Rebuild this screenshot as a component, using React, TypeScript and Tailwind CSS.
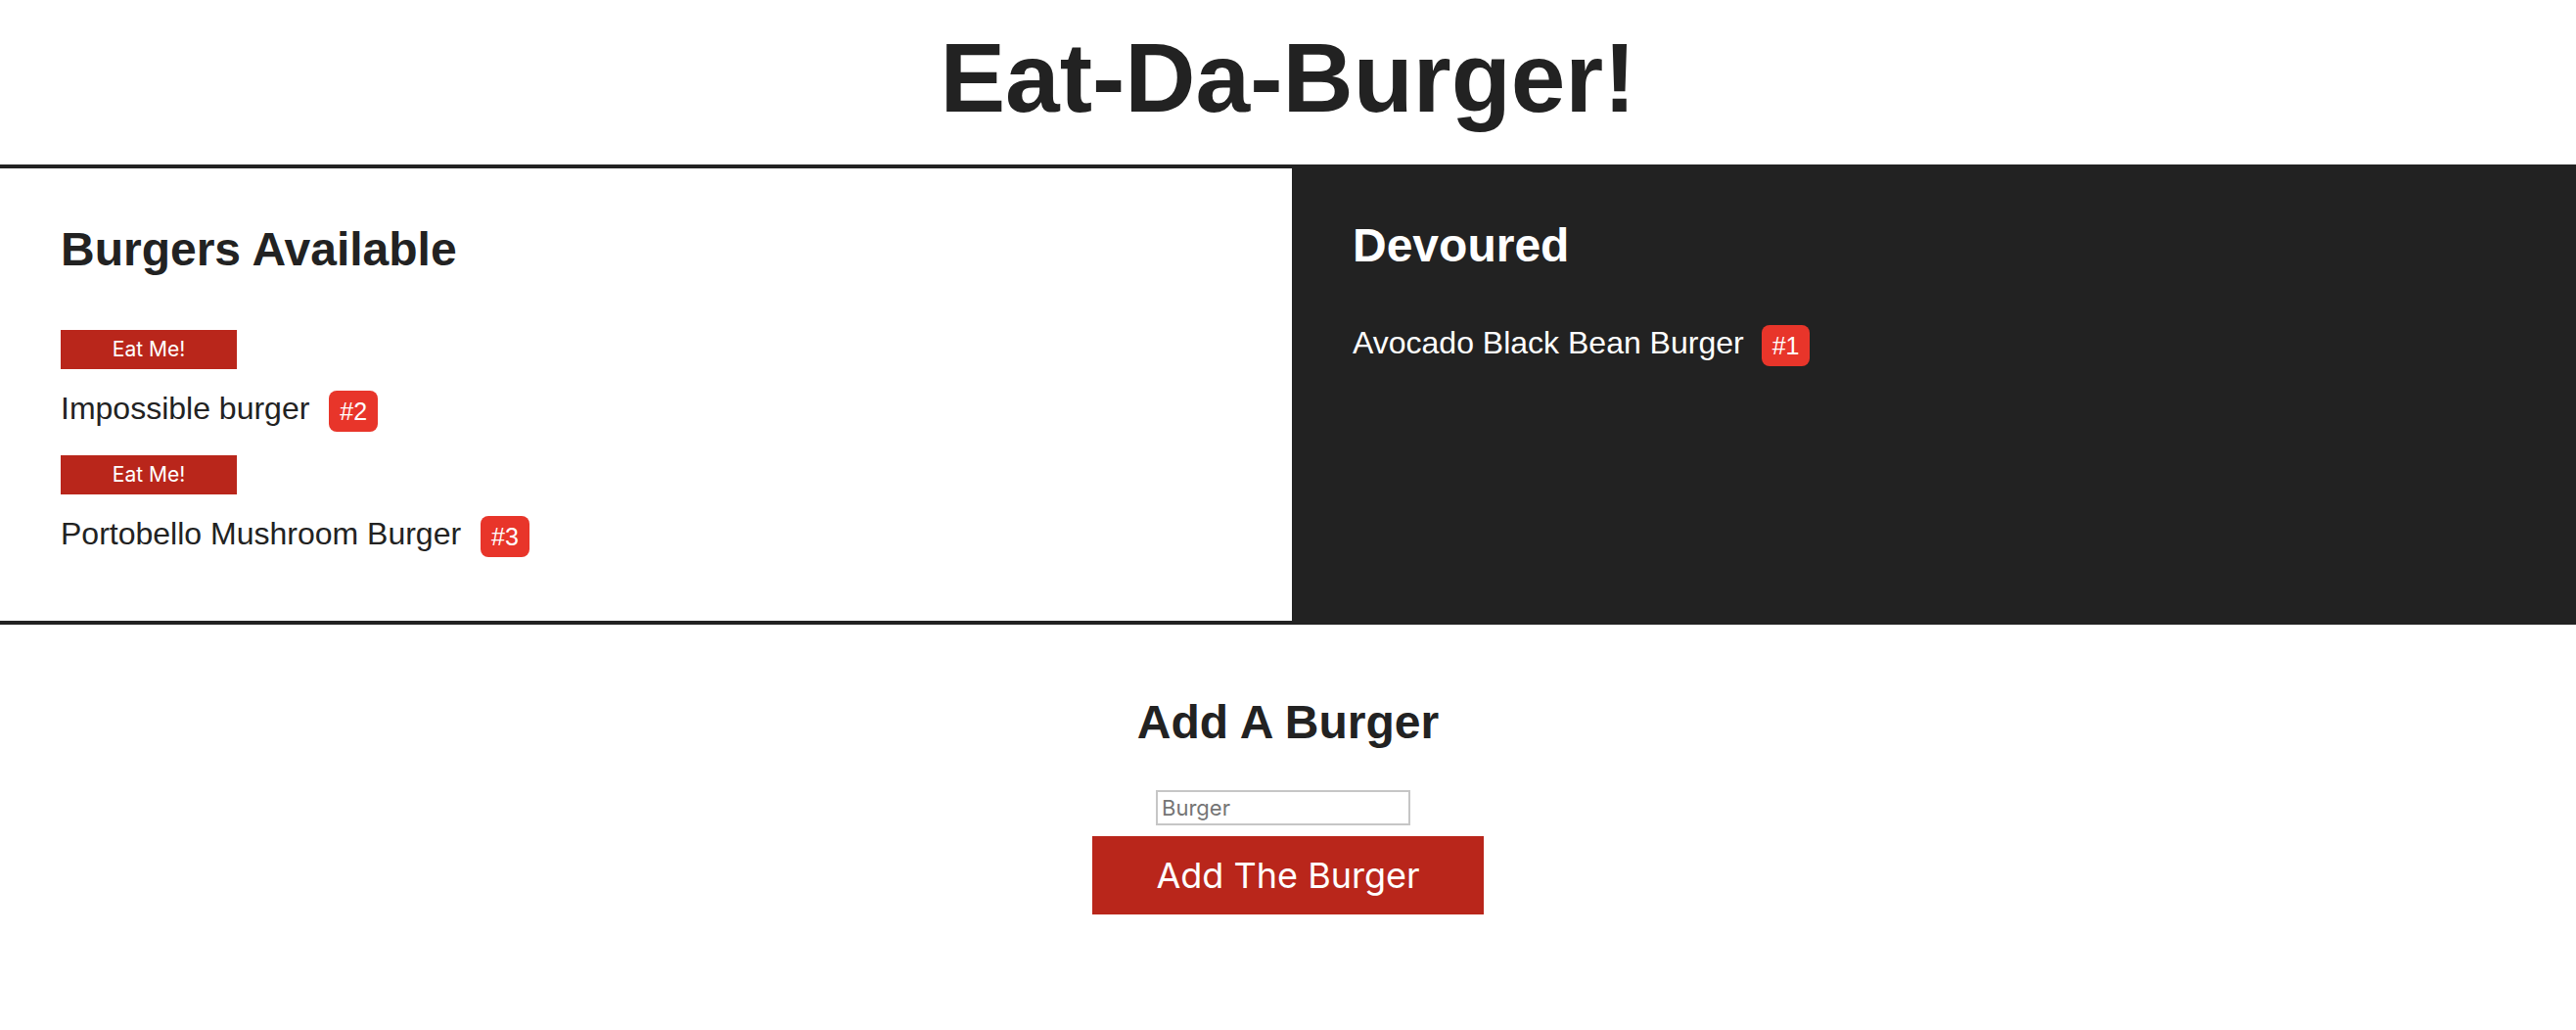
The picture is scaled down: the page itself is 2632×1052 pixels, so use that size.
const available = [
  { id: 2, name: "Impossible burger" },
  { id: 3, name: "Portobello Mushroom Burger" },
];

const devoured = [{ id: 1, name: "Avocado Black Bean Burger" }];

function Badge({ n }: { n: number }) {
  return (
    <span className="inline-block h-[42px] px-[11px] rounded-[8px] bg-[#e8352a] text-white text-[25px] leading-[42px]">
      #{n}
    </span>
  );
}

export default function App() {
  return (
    <div className="min-h-screen bg-white text-[#222] font-['Liberation_Sans',Arial,sans-serif]">
      {/* Title */}
      <header className="h-[168px] pt-[29px] text-center">
        <h1 className="text-[100px] leading-[100px] font-bold">Eat-Da-Burger!</h1>
      </header>

      {/* Burger columns */}
      <main className="flex h-[470px]">
        <section className="w-[1320px] border-y-4 border-[#222] bg-white pl-[62px] pt-[59px]">
          <h2 className="text-[48px] leading-[48px] font-bold">Burgers Available</h2>
          <ul className="mt-[58px] flex flex-col gap-[24px]">
            {available.map((b) => (
              <li key={b.id} className="flex flex-col items-start">
                <button className="w-[180px] h-[40px] bg-[#b9261b] text-white text-[21px] font-['Inter',sans-serif]">
                  Eat Me!
                </button>
                <div className="mt-[22px] flex items-start">
                  <span className="text-[32px] leading-[36px]">{b.name}</span>
                  <span className="ml-[20px] flex">
                    <Badge n={b.id} />
                  </span>
                </div>
              </li>
            ))}
          </ul>
        </section>

        <section className="flex-1 bg-[#222] text-white pl-[62px] pt-[59px]">
          <h2 className="text-[48px] leading-[48px] font-bold">Devoured</h2>
          <ul className="mt-[57px]">
            {devoured.map((b) => (
              <li key={b.id} className="flex items-start">
                <span className="text-[32px] leading-[36px]">{b.name}</span>
                <span className="ml-[18px] flex">
                  <Badge n={b.id} />
                </span>
              </li>
            ))}
          </ul>
        </section>
      </main>

      {/* Add form */}
      <section className="pt-[76px] flex flex-col items-center">
        <h3 className="text-[48px] leading-[48px] font-bold">Add A Burger</h3>
        <input
          type="text"
          placeholder="Burger"
          className="mt-[45px] mr-[10px] w-[260px] h-[36px] border-2 border-[#c6c6c6] px-[4px] text-[22px] font-['Inter',sans-serif] placeholder:text-[#757575] outline-none"
        />
        <button className="mt-[11px] w-[400px] h-[80px] bg-[#b9261b] text-white text-[36px] font-['Inter',sans-serif]">
          Add The Burger
        </button>
      </section>
    </div>
  );
}
